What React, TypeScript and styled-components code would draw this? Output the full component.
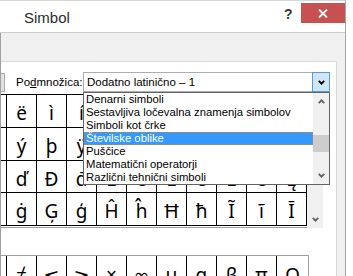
import React from "react";
import styled, { createGlobalStyle } from "styled-components";

const Global = createGlobalStyle`
  html, body { margin: 0; padding: 0; background: #fff; }
  body { width: 353px; height: 276px; overflow: hidden; }
`;

const Screen = styled.div`
  width: 353px;
  height: 276px;
  overflow: hidden;
  background: #fff;
  font-family: "Liberation Sans", Arial, sans-serif;
`;

const Window = styled.div`
  box-sizing: border-box;
  width: 346px;
  height: 276px;
  border-top: 1px solid #d6d6d6;
  border-right: 1px solid #a8a8a8;
  display: flex;
  flex-direction: column;
  background: #fff;
`;

const TitleBar = styled.div`
  box-sizing: border-box;
  height: 32px;
  flex: none;
  border-bottom: 1px solid #cccccc;
  display: flex;
  align-items: flex-start;
`;

const Title = styled.div`
  margin: 8px 0 0 24px;
  font-size: 15px;
  line-height: 17px;
  color: #2b2b2b;
`;

const Spacer = styled.div`
  flex: 1;
`;

const HelpMark = styled.div`
  width: 17px;
  margin-top: 5px;
  font-size: 14px;
  line-height: 16px;
  font-weight: bold;
  color: #333;
`;

const CloseButton = styled.div`
  width: 44px;
  height: 20px;
  margin-top: 2px;
  background: #c75050;
  display: flex;
  align-items: center;
  justify-content: center;
`;

const Body = styled.div`
  flex: 1;
  min-height: 0;
  background: #f0f0f0;
  border-left: 1px solid #a0a0a0;
  padding: 28px 8px 0 0;
  display: flex;
  flex-direction: column;
`;

const TabPanel = styled.div`
  flex: 1;
  min-height: 0;
  background: #fff;
  border-top: 1px solid #d9d9d9;
  border-right: 1px solid #d9d9d9;
  position: relative;
  overflow: hidden;
  display: flex;
  flex-direction: column;
  align-items: flex-start;
`;

const SubsetRow = styled.div`
  margin-top: 10px;
  height: 20px;
  flex: none;
  display: flex;
  align-items: center;
  font-size: 11.5px;
  color: #000;
`;

const FontStub = styled.div`
  box-sizing: border-box;
  width: 4px;
  height: 19px;
  background: #e1e1e1;
  border: 1px solid #adadad;
  border-left: none;
`;

const Label = styled.div`
  margin-left: 11px;
  width: 67px;
  white-space: nowrap;
`;

const Combo = styled.div`
  box-sizing: border-box;
  width: 247px;
  height: 20px;
  border: 1px solid #abadb3;
  background: #fff;
  display: flex;
  align-items: center;
`;

const ComboText = styled.div`
  flex: 1;
  padding-left: 3px;
  white-space: nowrap;
`;

const ComboArrow = styled.div`
  box-sizing: border-box;
  width: 18px;
  height: 20px;
  margin: -1px -1px -1px 0;
  background: #cfe5f8;
  border: 1px solid #5b9bd5;
  display: flex;
  align-items: center;
  justify-content: center;
`;

const Dropdown = styled.div`
  position: absolute;
  left: 82px;
  top: 30px;
  z-index: 5;
  box-sizing: border-box;
  width: 247px;
  height: 93px;
  border: 1px solid #646464;
  background: #fff;
  display: flex;
  font-size: 11.3px;
`;

const Items = styled.div`
  flex: 1;
  display: flex;
  flex-direction: column;
`;

const Item = styled.div<{ $selected?: boolean }>`
  box-sizing: border-box;
  height: 13px;
  line-height: 13px;
  padding-left: 2px;
  white-space: nowrap;
  overflow: hidden;
  color: ${(p) => (p.$selected ? "#fff" : "#000")};
  background: ${(p) => (p.$selected ? "#3399ff" : "transparent")};
  outline: ${(p) => (p.$selected ? "1px dotted #d9822b" : "none")};
  outline-offset: -1px;
`;

const ListScroll = styled.div`
  width: 16px;
  background: #f0f0f0;
  display: flex;
  flex-direction: column;
`;

const ScrollArrow = styled.div`
  height: 17px;
  flex: none;
  display: flex;
  align-items: center;
  justify-content: center;
`;

const Track = styled.div`
  flex: 1;
  padding-top: 25px;
`;

const Thumb = styled.div`
  height: 17px;
  background: #cdcdcd;
`;

const GridArea = styled.div`
  margin: 2px 0 0 -24px;
  flex: none;
  display: flex;
  align-items: flex-start;
`;

const SymbolGrid = styled.div`
  display: grid;
  grid-template-columns: repeat(11, 30px);
  grid-template-rows: 33px 33px 32px 33px;
  border-top: 1px solid #000;
  border-bottom: 1px solid #a0a0a0;
  padding-bottom: 1px;
`;

const Cell = styled.div`
  box-sizing: border-box;
  border-right: 1px solid #000;
  border-bottom: 1px solid #000;
  display: flex;
  align-items: center;
  justify-content: center;
  padding-top: 4px;
  font-family: "Noto Sans", "DejaVu Sans", sans-serif;
  font-size: 19px;
  color: #000;
`;

const GridScroll = styled.div`
  width: 16px;
  height: 134px;
  background: #f0f0f0;
  display: flex;
  flex-direction: column;
  justify-content: flex-end;
`;

const RecentBox = styled.div`
  margin: 27px 0 0 -25px;
  flex: none;
  display: flex;
  border: 1px solid #a0a0a0;
`;

const RecentCell = styled.div<{ $last?: boolean }>`
  box-sizing: border-box;
  width: ${(p) => (p.$last ? 31 : 30)}px;
  height: 34px;
  border-right: ${(p) => (p.$last ? "none" : "1px solid #000")};
  display: flex;
  align-items: center;
  justify-content: center;
  padding-top: 4px;
  font-family: "Noto Sans", "DejaVu Sans", sans-serif;
  font-size: 19px;
  color: #000;
`;

const Chevron = ({ up, color, w = 7 }: { up?: boolean; color: string; w?: number }) => (
  <svg width={w} height="5" viewBox="0 0 7 5">
    <path
      d={up ? "M0.8 4.2 L3.5 1.3 L6.2 4.2" : "M0.8 0.8 L3.5 3.7 L6.2 0.8"}
      fill="none"
      stroke={color}
      strokeWidth="1.8"
    />
  </svg>
);

const rows = [
  "êëìíîïðñòóô",
  "üýþÿĀāĂăĄąĆ",
  "ĎďĐđĒēĔĕĖėĘ",
  "ĠġĢģĤĥĦħĨĩĪ",
];

const recent = ["±", "≠", "≤", "≥", "×", "∞", "µ", "α", "β", "π", "Ω"];

const subsets = [
  "Denarni simboli",
  "Sestavljiva ločevalna znamenja simbolov",
  "Simboli kot črke",
  "Številske oblike",
  "Puščice",
  "Matematični operatorji",
  "Različni tehnični simboli",
];

export default function App() {
  return (
    <Screen>
      <Global />
      <Window>
        <TitleBar>
          <Title>Simbol</Title>
          <Spacer />
          <HelpMark>?</HelpMark>
          <CloseButton>
            <svg width="10" height="9" viewBox="0 0 10 9">
              <path d="M1 0.5 L9 8.5 M9 0.5 L1 8.5" stroke="#fff" strokeWidth="1.8" />
            </svg>
          </CloseButton>
        </TitleBar>
        <Body>
          <TabPanel>
            <SubsetRow>
              <FontStub />
              <Label>
                Po<u>d</u>množica:
              </Label>
              <Combo>
                <ComboText>Dodatno latinično – 1</ComboText>
                <ComboArrow>
                  <Chevron color="#000" />
                </ComboArrow>
              </Combo>
            </SubsetRow>
            <Dropdown>
              <Items>
                {subsets.map((s, i) => (
                  <Item key={s} $selected={i === 3}>
                    {s}
                  </Item>
                ))}
              </Items>
              <ListScroll>
                <ScrollArrow>
                  <Chevron up color="#606060" />
                </ScrollArrow>
                <Track>
                  <Thumb />
                </Track>
                <ScrollArrow>
                  <Chevron color="#606060" />
                </ScrollArrow>
              </ListScroll>
            </Dropdown>
            <GridArea>
              <SymbolGrid>
                {rows.map((r) =>
                  Array.from(r).map((ch, i) => <Cell key={r + i}>{ch}</Cell>)
                )}
              </SymbolGrid>
              <GridScroll>
                <ScrollArrow>
                  <Chevron color="#606060" />
                </ScrollArrow>
              </GridScroll>
            </GridArea>
            <RecentBox>
              {recent.map((ch, i) => (
                <RecentCell key={ch} $last={i === recent.length - 1}>
                  {ch}
                </RecentCell>
              ))}
            </RecentBox>
          </TabPanel>
        </Body>
      </Window>
    </Screen>
  );
}
